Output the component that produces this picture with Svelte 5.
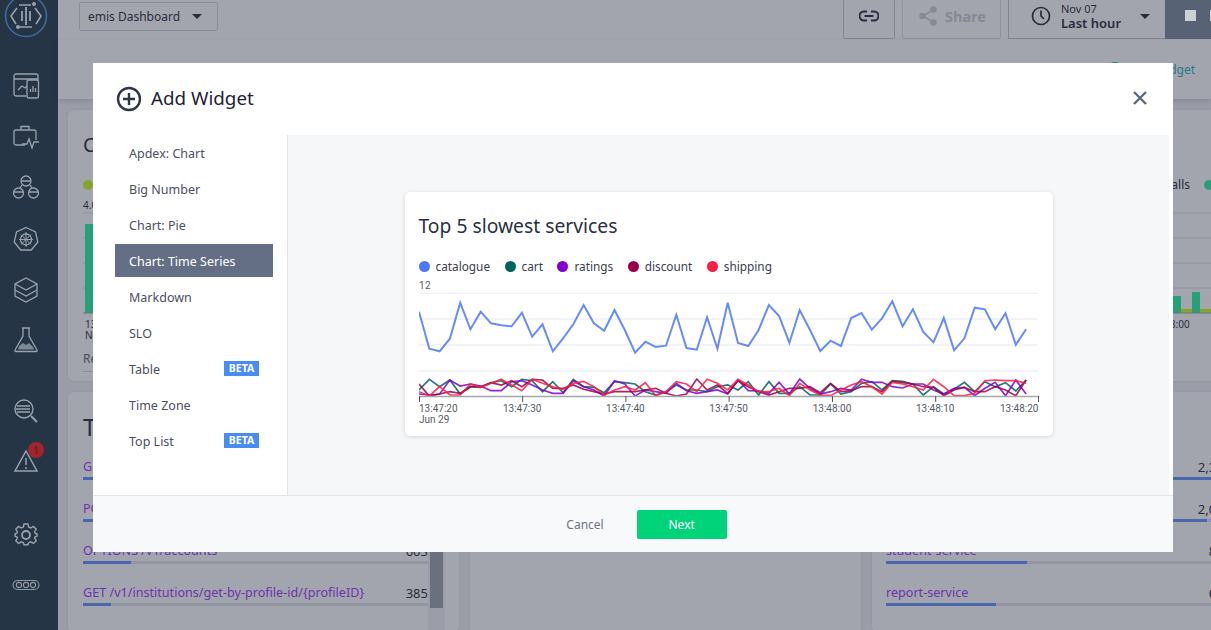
<script>
  const widgets = [
    { name: 'Apdex: Chart' },
    { name: 'Big Number' },
    { name: 'Chart: Pie' },
    { name: 'Chart: Time Series', active: true },
    { name: 'Markdown' },
    { name: 'SLO' },
    { name: 'Table', beta: true },
    { name: 'Time Zone' },
    { name: 'Top List', beta: true }
  ]

  // y values read off the reference chart, in 1/3 px
  const series = [
    { name: 'catalogue', color: '#4c78f5', width: 2, y: [365,476,484,446,338,418,365,400,406,409,368,440,403,484,445,403,345,400,422,360,420,488,455,471,467,374,474,479,382,476,338,459,468,420,345,378,458,360,420,483,452,468,384,369,419,385,334,409,358,426,457,384,481,445,353,358,418,370,464,418] },
    { name: 'cart', color: '#00645c', width: 1.7, y: [600,568,590,570,612,590,592,578,572,590,568,572,605,575,608,568,590,592,608,575,578,582,605,615,605,585,600,600,605,590,585,600,575,615,575,610,610,590,615,615,582,612,605,580,575,600,572,574,582,615,590,612,598,577,605,575,590,578,603,570] },
    { name: 'ratings', color: '#8000d0', width: 1.7, y: [612,615,612,570,588,582,588,602,602,575,572,585,600,610,610,572,590,600,618,572,582,618,600,605,610,580,602,610,605,600,612,570,602,603,610,577,612,567,595,612,605,595,600,568,577,577,590,594,582,582,600,612,595,592,617,595,577,617,570,612] },
    { name: 'discount', color: '#9c0048', width: 1.7, y: [582,618,612,605,610,590,590,578,585,572,590,568,570,595,595,585,598,605,612,605,605,605,600,595,610,618,612,567,600,585,610,572,590,605,615,605,595,595,590,608,580,605,602,590,590,605,574,578,582,590,592,617,600,592,605,605,590,600,617,570] },
    { name: 'shipping', color: '#fa1e42', width: 1.7, y: [605,618,590,615,615,582,592,580,568,585,602,568,580,590,598,580,574,590,615,600,590,600,578,617,605,575,582,605,568,580,600,568,585,605,605,595,617,580,600,615,617,600,585,575,590,612,577,582,590,600,568,590,617,617,610,572,570,572,572,580] }
  ]

  const points = (s) => s.y.map((v, i) => `${(i * 10.29).toFixed(1)},${(v / 3 - 88).toFixed(1)}`).join(' ')

  const gridLines = [15.3, 41, 67, 93]
  const ticks = [
    { x: 0, label: '13:47:20' },
    { x: 103.2, label: '13:47:30' },
    { x: 206.4, label: '13:47:40' },
    { x: 309.6, label: '13:47:50' },
    { x: 413, label: '13:48:00' },
    { x: 516.2, label: '13:48:10' },
    { x: 619, label: '13:48:20', end: true }
  ]

  const endpoints = [
    { name: 'GET /v1/students/get-by-profile-id', value: '1,204', pct: 100 },
    { name: 'POST /v1/auth/token', value: '1,020', pct: 48 },
    { name: 'OPTIONS /v1/accounts', value: '603', pct: 14 },
    { name: 'GET /v1/institutions/get-by-profile-id/{profileID}', value: '385', pct: 8 }
  ]
  const services = [
    { name: 'account-service', value: '2,310', pct: 100 },
    { name: 'gateway-service', value: '2,040', pct: 93 },
    { name: 'student-service', value: '830', pct: 41 },
    { name: 'report-service', value: '640', pct: 32 }
  ]
</script>

<div class="app">
  <nav class="sidebar">
    <svg class="logo" width="44" height="44" viewBox="0 0 44 44" fill="none">
      <circle cx="22" cy="22" r="20.5" stroke="#3f6a9c" stroke-width="1.6" />
      <path d="M13 14 7 22l5 8M31 14l6 8-5 8M15 11h12M16 33h12" stroke="#9aa3ad" stroke-width="1.6" />
      <path d="M22 13v18M18 17v10M26 17v10" stroke="#9aa3ad" stroke-width="1.8" />
      <circle cx="30" cy="10" r="2" fill="#9aa3ad" />
      <circle cx="14" cy="33" r="2" fill="#9aa3ad" />
    </svg>

    <div class="icons top">
      <svg width="28" height="28" viewBox="0 0 28 28" fill="none" stroke="#9aa3ad" stroke-width="1.3">
        <path d="M14 24H4a2 2 0 0 1-2-2V4a2 2 0 0 1 2-2h20a2 2 0 0 1 2 2v4" />
        <path d="M2 7h24M6 18l4-4 3 2 2-2" />
        <rect x="15" y="8" width="11.5" height="18" rx="2" />
        <path d="M18.500 20v-3M21 20v-6M23.500 20v-4" />
      </svg>
      <svg width="28" height="28" viewBox="0 0 28 28" fill="none" stroke="#9aa3ad" stroke-width="1.3">
        <path d="M13 22H4a2 2 0 0 1-2-2V9a2 2 0 0 1 2-2h18a2 2 0 0 1 2 2v8" />
        <path d="M9 7V3.500h8V7" />
        <path d="M10 21h5l2-5 3 9 2-6h5" />
      </svg>
      <svg width="28" height="28" viewBox="0 0 28 28" fill="none" stroke="#9aa3ad" stroke-width="1.3">
        <circle cx="14" cy="7" r="5" />
        <circle cx="6.500" cy="19" r="5" />
        <circle cx="21.500" cy="19" r="5" />
        <path d="M9 7h10M2 18h9M17 18h9M10 11l-2 3M18 11l2 3" />
      </svg>
      <svg width="28" height="28" viewBox="0 0 28 28" fill="none" stroke="#9aa3ad" stroke-width="1.3">
        <path d="M14 2.500 23.500 7l2.300 10-6.500 8H8.700l-6.500-8L4.500 7z" />
        <circle cx="14" cy="14.500" r="5.500" />
        <path d="M14 7v15M7 14.500h14M9 9.500l10 10M19 9.500l-10 10" stroke-width="1" />
      </svg>
      <svg width="28" height="28" viewBox="0 0 28 28" fill="none" stroke="#9aa3ad" stroke-width="1.3">
        <path d="M14 2 25 8v12l-11 6-11-6V8z" />
        <path d="M3 8l11 6 11-6M3 14l11 6 11-6" />
      </svg>
      <svg width="28" height="28" viewBox="0 0 28 28" fill="none" stroke="#9aa3ad" stroke-width="1.3">
        <path d="M10 1h8M11 1v8L3 23a1 1 0 0 0 1 1.500h20A1 1 0 0 0 25 23L17 9V1" />
        <path d="M7 19l4-3 3 2 3-2 4 4 1 2.500H6z" fill="#7f8994" stroke="none" />
      </svg>
    </div>

    <div class="icons mid">
      <svg width="28" height="28" viewBox="0 0 28 28" fill="none" stroke="#9aa3ad" stroke-width="1.4">
        <circle cx="12" cy="12" r="9" />
        <path d="M5 9h13M4 12h14M5 15h13" stroke-width="1.6" />
        <path d="M19 19l6 6" stroke-width="2" />
      </svg>
      <div class="alert">
        <svg width="28" height="28" viewBox="0 0 28 28" fill="none" stroke="#9aa3ad" stroke-width="1.5">
          <path d="M14 4 25 24H3z" />
          <path d="M14 11v7M14 20v2" />
        </svg>
        <span class="alert-count">1</span>
      </div>
    </div>

    <div class="icons bottom">
      <svg width="24" height="24" viewBox="0 0 24 24" fill="none" stroke="#9aa3ad" stroke-width="1.4">
        <path d="M10 2h4l.6 3 2.200 1 2.600-1.600 2.800 2.800L20.600 10l.4 1 2 1v2l-2 1-.4 1 1.600 2.800-2.800 2.600-2.600-1.600-2.200 1-.6 2h-4l-.6-2-2.200-1-2.600 1.600-2.800-2.600L3.400 16 3 15l-2-1v-2l2-1 .4-1-1.600-2.800 2.800-2.800L7.200 6l2.200-1z" transform="translate(0 -1)" />
        <circle cx="12" cy="12" r="4" stroke-width="1.8" />
      </svg>
      <svg width="28" height="12" viewBox="0 0 28 12" fill="none" stroke="#8f98a3" stroke-width="1.1">
        <rect x="1" y="1.500" width="26" height="9" rx="4.500" />
        <circle cx="7" cy="6" r="2.600" />
        <circle cx="14" cy="6" r="2.600" />
        <circle cx="21" cy="6" r="2.600" />
      </svg>
    </div>
  </nav>

  <div class="main">
    <header class="topbar">
      <div class="dash-select">emis Dashboard <span class="caret"></span></div>
      <div class="actions">
        <div class="btn link-btn">
          <svg width="20" height="12" viewBox="0 0 20 12" fill="none" stroke="#1e2230" stroke-width="2">
            <path d="M8 1.500H5a4.500 4.500 0 0 0 0 9h3M12 1.500h3a4.500 4.500 0 0 1 0 9h-3M5.500 6h9" />
          </svg>
        </div>
        <div class="btn share-btn">
          <svg width="18" height="20" viewBox="0 0 18 20" fill="#c9ccd2" stroke="#c9ccd2" stroke-width="1.500">
            <circle cx="14.500" cy="3.500" r="2.500" />
            <circle cx="3.500" cy="10" r="2.500" />
            <circle cx="14.500" cy="16.500" r="2.500" />
            <path d="M14 4 4 10l10 6" fill="none" />
          </svg>
          <span>Share</span>
        </div>
        <div class="btn time-btn">
          <svg width="20" height="20" viewBox="0 0 20 20" fill="none" stroke="#1e2230" stroke-width="1.700">
            <circle cx="10" cy="10" r="8.500" />
            <path d="M10 4.500V10l3 3" />
          </svg>
          <div class="time-text">
            <span class="date">Nov 07</span>
            <span class="range">Last hour</span>
          </div>
          <span class="caret"></span>
        </div>
        <div class="run-block"><i></i><i></i></div>
      </div>
    </header>

    <div class="subbar">
      <span class="add-dot"></span>
      <span class="add-link">Add Widget</span>
    </div>

    <div class="grid">
      <section class="card wide">
        <h2>Calls</h2>
        <div class="legend-row">
          <span class="dot lime"></span>
          <span class="legend-end">Calls</span>
          <span class="dot green"></span>
        </div>
        <div class="axis-top">4.0K</div>
        <svg class="bars" width="1160" height="132" viewBox="0 0 1160 132">
          <path d="M0 1h1160M0 26h1160M0 51h1160M0 76h1160" stroke="#dadce2" />
          <rect x="2" y="97" width="1158" height="4" fill="#cbff13" />
          <rect x="2" y="12" width="8" height="89" fill="#1ef69d" />
          <rect x="1090" y="84" width="8" height="17" fill="#1ef69d" />
          <rect x="1109" y="80" width="8" height="21" fill="#1ef69d" />
          <path d="M0 101h1160" stroke="#9a9ea8" />
          <text x="2" y="116" font-size="10" fill="#1e2230">13:48:00</text>
          <text x="2" y="127" font-size="10" fill="#1e2230">Nov 07</text>
          <text x="1067" y="116" font-size="10" fill="#1e2230">13:48:00</text>
        </svg>
        <div class="foot-note">Requests</div>
      </section>

      <section class="card list-card scrolled">
        <div class="list">
          <h2>Top Endpoints</h2>
          {#each endpoints as row (row.name)}
            <div class="row">
              <div class="row-line"><a href="#top">{row.name}</a><span>{row.value}</span></div>
              <div class="track"><div class="fill" style="width: {row.pct}%"></div></div>
            </div>
          {/each}
        </div>
        <div class="scrollbar"><div class="thumb"></div></div>
      </section>

      <section class="card"></section>

      <section class="card list-card right-list">
        <div class="list">
          <h2>Top Services</h2>
          {#each services as row (row.name)}
            <div class="row">
              <div class="row-line"><a href="#top">{row.name}</a><span>{row.value}</span></div>
              <div class="track"><div class="fill" style="width: {row.pct}%"></div></div>
            </div>
          {/each}
        </div>
      </section>
    </div>

    <div class="backdrop">
      <div class="modal">
        <div class="modal-head">
          <svg width="26" height="26" viewBox="0 0 26 26" fill="none" stroke="#2e3545" stroke-width="2.400">
            <circle cx="13" cy="13" r="11" />
            <path d="M13 7v12M7 13h12" />
          </svg>
          <h1>Add Widget</h1>
          <svg class="close" width="14" height="14" viewBox="0 0 14 14" fill="none" stroke="#5d6880" stroke-width="2.400">
            <path d="M1 1l12 12M13 1 1 13" />
          </svg>
        </div>

        <div class="modal-body">
          <ul class="widget-nav">
            {#each widgets as w (w.name)}
              <li class:active={w.active}>
                <span>{w.name}</span>
                {#if w.beta}<b class="beta">BETA</b>{/if}
              </li>
            {/each}
          </ul>

          <div class="preview">
            <div class="preview-card">
              <h3>Top 5 slowest services</h3>
              <div class="legend">
                {#each series as s (s.name)}
                  <span class="legend-item"><i style="background: {s.color}"></i>{s.name}</span>
                {/each}
              </div>
              <svg class="chart" width="621" height="146" viewBox="0 0 621 146">
                <text x="0" y="11" font-size="10" letter-spacing="0.4" fill="#555b66">12</text>
                {#each gridLines as y}
                  <line x1="0" x2="619" y1={y} y2={y} stroke="#eff1f5" stroke-width="1.300" />
                {/each}
                {#each series as s (s.name)}
                  <polyline points={points(s)} fill="none" stroke={s.color} stroke-width={s.width} stroke-opacity="0.85" />
                {/each}
                <line x1="0" x2="619" y1="118.500" y2="118.500" stroke="#a5a7ab" stroke-width="1.500" />
                {#each ticks as t (t.label)}
                  <line x1={t.x + 0.5} x2={t.x + 0.5} y1="118" y2="124" stroke="#555" />
                  <text x={t.end ? t.x + 0.5 : t.x} y="134" font-size="10" text-anchor={t.end ? 'end' : t.x === 0 ? 'start' : 'middle'} fill="#555b66">{t.label}</text>
                {/each}
                <text x="0" y="145" font-size="10" fill="#555b66">Jun 29</text>
              </svg>
            </div>
          </div>
        </div>

        <div class="modal-foot">
          <span class="cancel">Cancel</span>
          <span class="next">Next</span>
        </div>
      </div>
    </div>
  </div>
</div>

<style>
  :global(body) {
    font-family: 'Noto Sans', 'Open Sans', sans-serif;
    color: #1e2230;
  }
  .app {
    display: flex;
    height: 630px;
    overflow: hidden;
  }

  .sidebar {
    width: 58px;
    flex: none;
    background: #263545;
    display: flex;
    flex-direction: column;
    align-items: center;
  }
  .logo {
    margin: -6px 6px 0 0;
  }
  .icons {
    display: flex;
    flex-direction: column;
    align-items: center;
    margin-right: 7px;
  }
  .icons.top {
    gap: 23px;
    margin-top: 34px;
  }
  .icons.mid {
    gap: 22px;
    margin-top: 42px;
  }
  .icons.bottom {
    gap: 32px;
    margin-top: 48px;
  }
  .alert {
    position: relative;
    height: 28px;
  }
  .alert-count {
    position: absolute;
    top: -5px;
    left: 16px;
    width: 16px;
    height: 16px;
    border-radius: 50%;
    background: #a3242d;
    color: #5e2430;
    font-size: 10px;
    font-weight: 700;
    line-height: 16px;
    text-align: center;
  }

  .main {
    flex: 1;
    min-width: 0;
    position: relative;
    background: #eef0f4;
  }

  .topbar {
    height: 40px;
    display: flex;
    justify-content: space-between;
    align-items: flex-start;
    padding-left: 21px;
    background: #fff;
  }
  .dash-select {
    margin-top: 2px;
    width: 139px;
    height: 29px;
    box-sizing: border-box;
    border: 1px solid #d2d5dc;
    border-radius: 2px;
    padding-left: 8px;
    font-size: 12px;
    line-height: 27px;
    display: flex;
    align-items: center;
    gap: 12px;
  }
  .caret {
    width: 0;
    height: 0;
    border: 5px solid transparent;
    border-top: 5px solid #1e2230;
    border-bottom: 0;
  }
  .actions {
    display: flex;
    align-items: flex-start;
  }
  .btn {
    height: 40px;
    margin-top: -1px;
    padding-bottom: 6px;
    box-sizing: border-box;
    border: 1px solid #c4c7cf;
    border-radius: 2px;
    display: flex;
    align-items: center;
    justify-content: center;
  }
  .link-btn {
    width: 52px;
    margin-right: 7px;
  }
  .share-btn {
    width: 99px;
    margin-right: 7px;
    gap: 8px;
    padding-left: 2px;
    color: #c9ccd2;
    font-size: 14.500px;
    font-weight: 700;
    border-color: #dcdee3;
  }
  .time-btn {
    width: 157px;
    justify-content: flex-start;
    padding-left: 22px;
    gap: 10px;
    border-right: 0;
    border-radius: 0;
  }
  .time-text {
    display: flex;
    flex-direction: column;
    width: 69px;
    line-height: 15px;
  }
  .date {
    font-size: 11px;
  }
  .range {
    font-size: 13px;
    font-weight: 600;
  }
  .run-block {
    position: relative;
    z-index: 2;
    width: 46px;
    height: 40px;
    margin-top: -1px;
    background: #586275;
    display: flex;
    align-items: flex-start;
    gap: 14px;
    padding: 11px 0 0 20px;
    box-sizing: border-box;
  }
  .run-block i {
    flex: none;
    width: 11px;
    height: 11px;
    background: #cdd0d6;
  }

  .subbar {
    height: 59px;
    display: flex;
    justify-content: flex-end;
    align-items: center;
    padding-right: 16px;
    gap: 6px;
    background: #fff;
    box-shadow: 0 2px 5px rgba(0, 0, 0, 0.15);
    position: relative;
    font-size: 12px;
  }
  .add-dot {
    width: 16px;
    height: 16px;
    border-radius: 50%;
    background: #12b3b3;
  }
  .add-link {
    color: #12b3b3;
  }

  .grid {
    display: grid;
    grid-template-columns: 391px 391px 374px;
    column-gap: 11px;
    row-gap: 11px;
    padding: 11px 0 0 10px;
    width: 1180px;
  }
  .card {
    background: #fff;
    border-radius: 6px;
    box-shadow: 0 0 3px rgba(0, 0, 0, 0.08);
    box-sizing: border-box;
    height: 271px;
  }
  .card h2 {
    margin: 0;
    font-size: 20px;
    font-weight: 400;
    line-height: 26px;
  }
  .wide {
    grid-column: 1 / -1;
    padding: 22px 15px 0;
  }
  .legend-row {
    display: flex;
    align-items: center;
    margin-top: 20px;
    height: 13px;
    font-size: 12px;
  }
  .dot {
    width: 10px;
    height: 10px;
    border-radius: 50%;
  }
  .lime {
    background: #cbff13;
  }
  .green {
    background: #1ef69d;
    margin-left: 14px;
  }
  .legend-end {
    margin-left: 1060px;
    width: 37px;
    text-align: right;
  }
  .axis-top {
    font-size: 10px;
    line-height: 14px;
    margin-top: 7px;
  }
  .bars {
    display: block;
    font-family: inherit;
  }
  .foot-note {
    margin-top: 7px;
    font-size: 12px;
    line-height: 16px;
    border-bottom: 1px solid #dadce2;
    padding-bottom: 4px;
    width: 60px;
    color: #555b66;
  }

  .list-card {
    height: 240px;
    display: flex;
    padding: 22px 0 0 15px;
  }
  .right-list {
    padding-left: 14px;
  }
  .list {
    flex: 1;
    min-width: 0;
    padding-right: 15px;
  }
  .scrolled .list {
    padding-right: 0;
  }
  .list h2 {
    font-size: 24px;
    margin-bottom: 12px;
  }
  .row {
    height: 42px;
    box-sizing: border-box;
  }
  .row-line {
    display: flex;
    justify-content: space-between;
    font-size: 12.600px;
    line-height: 18px;
    padding-top: 6px;
    white-space: nowrap;
  }
  .row-line a {
    color: #9a30ff;
    text-decoration: none;
  }
  .row-line span {
    font-size: 13px;
  }
  .track {
    height: 3px;
    margin-top: 1px;
    background: #e1e3e9;
  }
  .fill {
    height: 100%;
    background: #5e8fff;
  }
  .scrollbar {
    width: 17px;
    margin-right: 14px;
    background: #f0f1f4;
    height: 100%;
  }
  .thumb {
    height: 194px;
    width: 13px;
    margin-left: 2px;
    background: #9a9fa9;
  }

  .backdrop {
    position: absolute;
    inset: 0;
    z-index: 1;
    background: rgba(50, 55, 75, 0.45);
    padding: 63px 0 0 35px;
  }
  .modal {
    width: 1080px;
    height: 489px;
    background: #fff;
    display: flex;
    flex-direction: column;
  }
  .modal-head {
    height: 72px;
    flex: none;
    display: flex;
    align-items: center;
    gap: 9px;
    padding: 0 26px 0 23px;
  }
  .modal-head h1 {
    margin: 0 0 3px;
    font-size: 18.800px;
    font-weight: 400;
    color: #1e2433;
  }
  .close {
    margin-left: auto;
    margin-bottom: 2px;
  }
  .modal-body {
    height: 360px;
    flex: none;
    display: flex;
    padding-right: 4px;
    border-bottom: 1px solid #e2e4e8;
  }
  .widget-nav {
    list-style: none;
    margin: 0;
    padding: 1px 14px 0 22px;
    width: 195px;
    box-sizing: border-box;
    border-right: 1px solid #e2e4e8;
    flex: none;
  }
  .widget-nav li {
    height: 33px;
    box-sizing: border-box;
    margin-bottom: 3px;
    display: flex;
    align-items: center;
    justify-content: space-between;
    padding: 2px 14px 0;
    font-size: 12.500px;
    color: #4a5060;
  }
  .widget-nav li.active {
    background: #646f85;
    color: #fff;
  }
  .beta {
    width: 35px;
    height: 15px;
    margin-bottom: 2px;
    background: #4a8df0;
    color: #fff;
    font-size: 10.500px;
    line-height: 15px;
    text-align: center;
  }
  .preview {
    flex: 1;
    background: #f6f7f9;
    display: flex;
    align-items: center;
    justify-content: center;
    padding-bottom: 2px;
  }
  .preview-card {
    width: 648px;
    height: 244px;
    box-sizing: border-box;
    background: #fff;
    border-radius: 5px;
    box-shadow: 0 1px 4px rgba(0, 0, 0, 0.14);
    padding: 21px 0 0 14px;
  }
  .preview-card h3 {
    margin: 0;
    font-size: 19.300px;
    font-weight: 400;
    line-height: 26px;
    color: #2b3040;
  }
  .legend {
    display: flex;
    gap: 14.500px;
    margin-top: 19px;
    height: 16px;
    align-items: center;
    font-size: 11.800px;
    color: #3a4050;
  }
  .legend-item {
    display: flex;
    align-items: center;
    gap: 6px;
  }
  .legend-item i {
    width: 11px;
    height: 11px;
    border-radius: 50%;
  }
  .chart {
    display: block;
    margin-top: 4px;
    font-family: 'Roboto', sans-serif;
  }
  .modal-foot {
    flex: 1;
    background: #f8f9fb;
    display: flex;
    align-items: center;
    justify-content: center;
    gap: 33px;
    padding-left: 27px;
    font-size: 12px;
  }
  .cancel {
    color: #6d7483;
  }
  .next {
    width: 90px;
    height: 29px;
    background: #00d37a;
    border-radius: 2px;
    color: #fff;
    line-height: 29px;
    text-align: center;
  }
</style>
